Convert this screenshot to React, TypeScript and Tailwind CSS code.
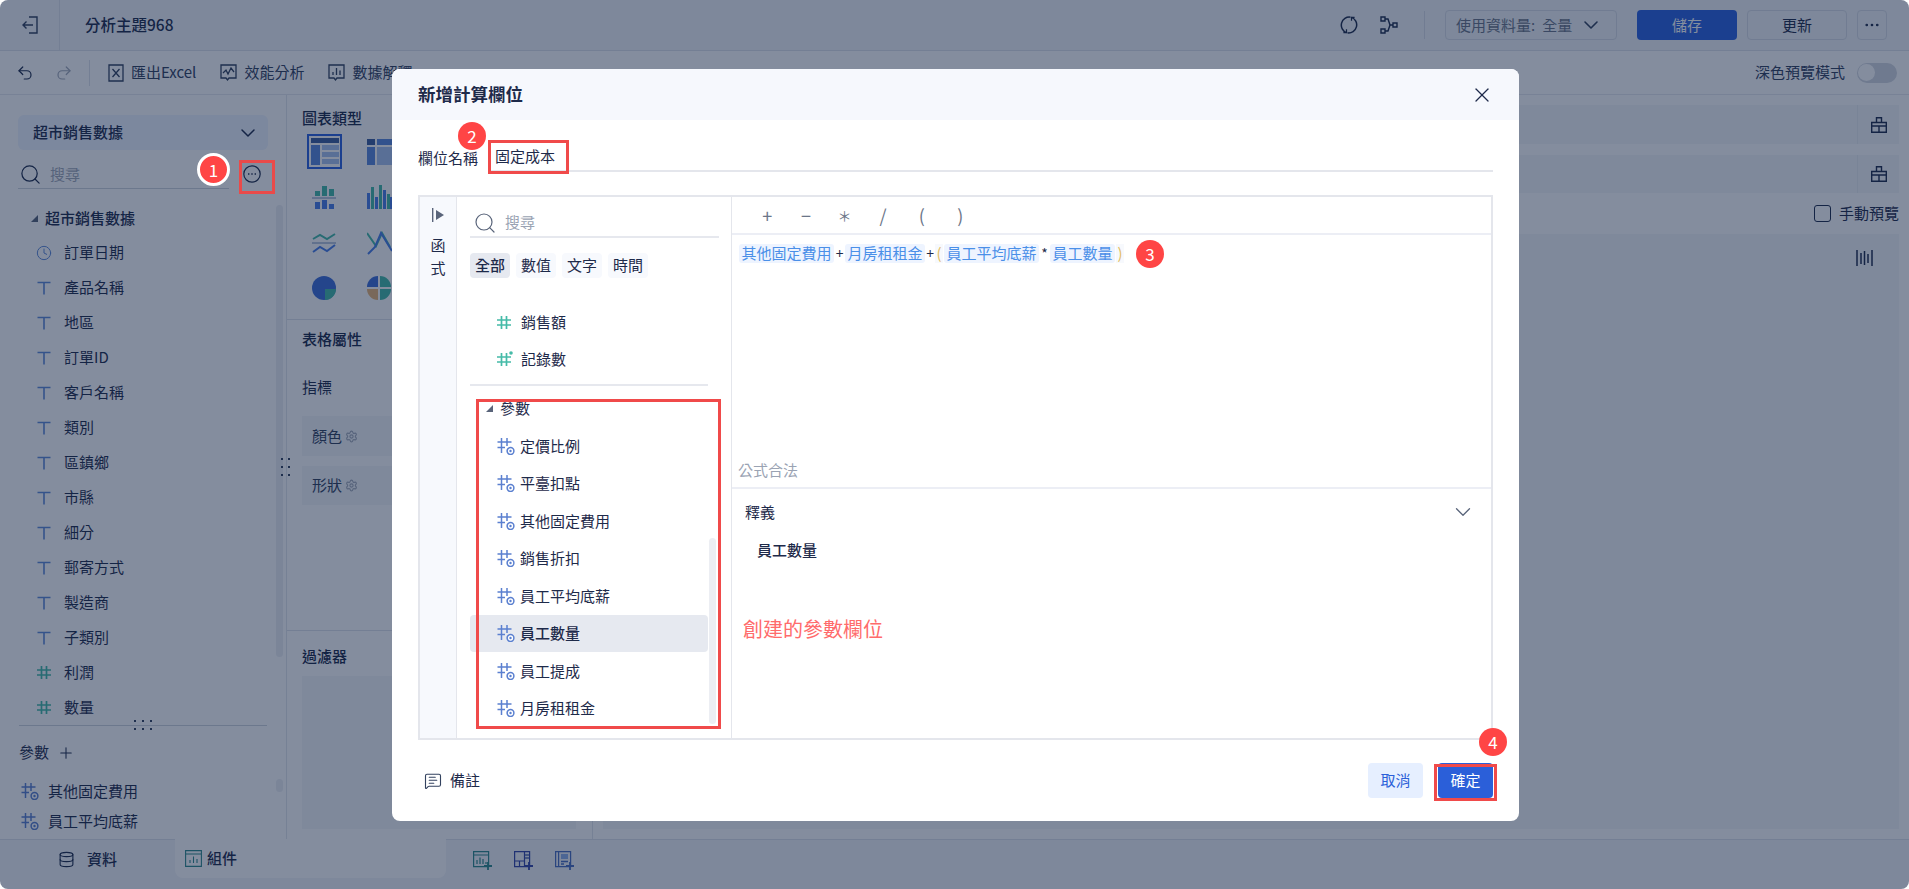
import {
  ChevronDown,
  Clock,
  Database,
  Ellipsis,
  MessageSquareText,
  Plus,
  Redo2,
  Search,
  Settings,
  Undo2,
  X,
} from "lucide-react";

/* ── small drawn icons ─────────────────────────────────────────────────── */
const TIcon = () => (
  <svg width="16" height="16" viewBox="0 0 16 16" className="shrink-0" fill="none" stroke="#5f8ad8" strokeWidth="1.6">
    <path d="M1.5 2.5h13M8 2.5v12" />
  </svg>
);

const HashIcon = ({ star }: { star?: boolean }) => (
  <svg width="17" height="17" viewBox="0 0 17 17" className="shrink-0" fill="none" stroke="#45bba8" strokeWidth="1.7">
    <path d="M5.5 2v13M10.5 2v13M1 6h14M1 11h14" />
    {star && <circle cx="15" cy="2" r="1.8" fill="#45bba8" stroke="none" />}
  </svg>
);

const ParamIcon = () => (
  <svg width="18" height="18" viewBox="0 0 18 18" className="shrink-0" fill="none" stroke="#5b80d0" strokeWidth="1.5">
    <path d="M4.5 1v15M10 1v8M0.5 5h14M0.5 10.5h7.5" />
    <circle cx="13.5" cy="14" r="3.4" fill="#fff" />
    <circle cx="13.5" cy="14" r="1.2" fill="#5b80d0" stroke="none" />
  </svg>
);

const EllipsisCircle = () => (
  <svg width="18" height="18" viewBox="0 0 18 18" fill="none" stroke="#1f2d4d" strokeWidth="1.2">
    <circle cx="9" cy="9" r="8.2" />
    <path d="M5 8.2h1.4v1.6H5zM8.3 8.2h1.4v1.6H8.3zM11.6 8.2H13v1.6h-1.4z" fill="#1f2d4d" stroke="none" />
  </svg>
);

const BackIcon = () => (
  <svg width="18" height="20" viewBox="0 0 18 20" fill="none" stroke="#33425f" strokeWidth="1.4">
    <path d="M8 2h8v16H8M12 10H2M5.5 6.5 2 10l3.5 3.5" />
  </svg>
);

const ExcelIcon = () => (
  <svg width="16" height="18" viewBox="0 0 16 18" fill="none" stroke="#33425f" strokeWidth="1.3">
    <path d="M1 1h14v16H1zM4.5 5l7 8M11.5 5l-7 8M1 1v16" />
  </svg>
);

const PulseIcon = () => (
  <svg width="17" height="18" viewBox="0 0 17 18" fill="none" stroke="#33425f" strokeWidth="1.3">
    <path d="M1 1h15v13H9l-1.5 2L6 14H1zM3 9l3-3 2 4 3-6 3 4" />
  </svg>
);

const BarsNoteIcon = () => (
  <svg width="17" height="18" viewBox="0 0 17 18" fill="none" stroke="#33425f" strokeWidth="1.3">
    <path d="M1 1h15v13H9l-1.5 2L6 14H1zM5 11V8M8.5 11V4M12 11V6.5" />
  </svg>
);

const CycleIcon = () => (
  <svg width="18" height="18" viewBox="0 0 18 18" fill="none" stroke="#1f2d4d" strokeWidth="1.5">
    <path d="M10.5 1.2A8 8 0 0 0 6.5 16.6M7.5 16.8A8 8 0 0 0 11.5 1.4" />
    <path d="M6.5 13.2v3.4H3.4M11.5 4.8V1.4h3.1" strokeWidth="1.2" />
  </svg>
);

const FlowIcon = () => (
  <svg width="18" height="18" viewBox="0 0 18 18" fill="none" stroke="#1f2d4d" strokeWidth="1.4">
    <path d="M1 1h4v4H1zM1 13h4v4H1zM13 7h4v4h-4zM5 3h3l2 6h3M5 15h3l2-6" />
  </svg>
);

const BrushIcon = () => (
  <svg width="16" height="16" viewBox="0 0 16 16" fill="none" stroke="#1f2d4d" strokeWidth="1.4">
    <path d="M.7 5.5h14.6v9.8H.7zM5.5 5.5V.7h5v4.8M.7 9h14.6M8 9v6.3" />
  </svg>
);

const WaveIcon = () => (
  <svg width="17" height="18" viewBox="0 0 17 18" fill="none" stroke="#1f2d4d" strokeWidth="1.5">
    <path d="M1 1v16M5 4v11M8.5 2v14M12 5v9M16 1v16" />
  </svg>
);

const Caret = () => (
  <svg width="7" height="7" viewBox="0 0 7 7" className="shrink-0">
    <path d="M7 0v7H0z" fill="#59647a" />
  </svg>
);

const RailIcon = () => (
  <svg width="14" height="16" viewBox="0 0 14 16" fill="#59647a">
    <path d="M1 1h1.4v14H1zM5 3l8 5-8 5z" />
  </svg>
);

/* ── chart type thumbnails ─────────────────────────────────────────────── */
const TableThumb = () => (
  <svg width="28" height="27" viewBox="0 0 28 27" fill="#5b88dc">
    <path d="M0 0h28v5H0z" fill="#3d5f9e" />
    <path d="M0 7h9v20H0z" />
    <path d="M11 7h17v5H11zM11 14h17v5H11zM11 21h17v5H11z" fill="#a9c2ee" />
  </svg>
);
const CrossThumb = () => (
  <svg width="26" height="26" viewBox="0 0 26 26" fill="#5b88dc">
    <path d="M0 0h8v6H0z" fill="#3d5f9e" />
    <path d="M10 0h16v6H10zM0 8h8v18H0z" />
    <path d="M10 8h16v18H10z" fill="#a9c2ee" />
  </svg>
);
const MirrorBarThumb = () => (
  <svg width="24" height="24" viewBox="0 0 24 24">
    <path d="M3 6h5v5H3zM10 1h5v10h-5zM17 4h5v7h-5z" fill="#45bba8" />
    <path d="M0 12h24v2H0z" fill="#b9c7dd" />
    <path d="M3 17h5v7H3zM10 15h5v9h-5zM17 19h5v5h-5z" fill="#4a7fe8" />
  </svg>
);
const GroupBarThumb = () => (
  <svg width="26" height="24" viewBox="0 0 26 24">
    <path d="M0 8h3v16H0zM8 12h3v12H8zM16 5h3v19h-3zM23 12h3v12h-3z" fill="#4a7fe8" />
    <path d="M4 2h3v22H4zM12 0h3v24h-3zM20 9h3v15h-3z" fill="#45bba8" />
  </svg>
);
const AreaLineThumb = () => (
  <svg width="24" height="22" viewBox="0 0 24 22" fill="none" strokeWidth="2">
    <path d="M1 7 8 3l7 4 8-5" stroke="#45bba8" />
    <path d="M0 11h24" stroke="#b9c7dd" />
    <path d="M1 20l7-5 7 4 8-6" stroke="#4a7fe8" />
  </svg>
);
const CrossLineThumb = () => (
  <svg width="26" height="24" viewBox="0 0 26 24" fill="none" strokeWidth="2">
    <path d="M0 2l9 13 6-13 8 14" stroke="#45bba8" />
    <path d="M1 23l7-7 6-14 11 18" stroke="#4a7fe8" />
  </svg>
);
const PieThumb = () => (
  <svg width="24" height="24" viewBox="0 0 24 24">
    <circle cx="12" cy="12" r="12" fill="#3f6fd8" />
    <path d="M13 13h11a11 11 0 0 1-11 11z" fill="#45bba8" />
  </svg>
);
const MultiPieThumb = () => (
  <svg width="24" height="24" viewBox="0 0 24 24">
    <path d="M11 0v11H0A11 11 0 0 1 11 0z" fill="#3f6fd8" />
    <path d="M13 0a11 11 0 0 1 11 11H13z" fill="#45bba8" />
    <path d="M13 13h11a11 11 0 0 1-11 11z" fill="#45bba8" />
    <path d="M11 13v11A11 11 0 0 1 0 13z" fill="#e8b478" />
  </svg>
);

const AddChart = () => (
  <svg width="20" height="19" viewBox="0 0 20 19" fill="none" stroke="#2f8a8c" strokeWidth="1.2">
    <path d="M.6.6h15v15H.6zM.6 4h15M4 13V9M7 13V6.5M10 13V8M13 13v-2" />
    <path d="M15 11v8M11 15h8" strokeWidth="1.8" />
  </svg>
);
const AddGrid = () => (
  <svg width="20" height="19" viewBox="0 0 20 19" fill="none" stroke="#3547a8" strokeWidth="1.2">
    <path d="M.6.6h15v15H.6zM.6 10h10M10.5.6v15M5.5 10v5.6" />
    <path d="M11 4h4M11 7h4" stroke="#7c8fc0" strokeWidth="2" />
    <path d="M15 11v8M11 15h8" strokeWidth="1.8" />
  </svg>
);
const AddPage = () => (
  <svg width="20" height="19" viewBox="0 0 20 19" fill="none" stroke="#4a6fc0" strokeWidth="1.2">
    <path d="M.6.6h15v15H.6zM3.6.6v15" />
    <path d="M6 3h7v5H6z" fill="#8fb0ea" stroke="none" />
    <path d="M6 10.5h7M6 13h3" strokeWidth="1.4" />
    <path d="M15 11v8M11 15h8" strokeWidth="1.8" />
  </svg>
);

const CardChartIcon = () => (
  <svg width="17" height="17" viewBox="0 0 17 17" fill="none" stroke="#2f8a8c" strokeWidth="1.1">
    <path d="M.6.6h15.8v15.8H.6zM.6 4h15.8M5 13v-3M8.5 13V6.5M12 13V9" />
  </svg>
);

/* ── data ──────────────────────────────────────────────────────────────── */
const fields: { name: string; kind: "date" | "text" | "num" }[] = [
  { name: "訂單日期", kind: "date" },
  { name: "產品名稱", kind: "text" },
  { name: "地區", kind: "text" },
  { name: "訂單ID", kind: "text" },
  { name: "客戶名稱", kind: "text" },
  { name: "類別", kind: "text" },
  { name: "區鎮鄉", kind: "text" },
  { name: "市縣", kind: "text" },
  { name: "細分", kind: "text" },
  { name: "郵寄方式", kind: "text" },
  { name: "製造商", kind: "text" },
  { name: "子類別", kind: "text" },
  { name: "利潤", kind: "num" },
  { name: "數量", kind: "num" },
];

const params = ["定價比例", "平臺扣點", "其他固定費用", "銷售折扣", "員工平均底薪", "員工數量", "員工提成", "月房租租金"];

const Token = ({ children }: { children: string }) => (
  <span className="h-[19px] flex items-center rounded-[3px] bg-[#eef4ff] px-[2.5px] text-[#4a8fe8]">{children}</span>
);

const Op = ({ children, w }: { children: string; w: string }) => (
  <span className={`text-center text-[#1e2a4a] text-[14px] ${w}`}>{children}</span>
);

const Paren = ({ children }: { children: string }) => (
  <span className="h-[19px] w-[8px] flex items-center justify-center bg-[#f7f9fd] text-[#e3bd62] text-[15px]">{children}</span>
);

const Badge = ({ n, pos }: { n: number; pos: string }) => (
  <div className={`absolute h-[28px] w-[28px] rounded-full bg-[#ff4545] flex items-center justify-center text-white text-[17px] ${pos}`}>
    {n}
  </div>
);

/* ═══════════════════════════════════════════════════════════════════════ */
export default function App() {
  return (
    <div className="relative w-screen h-screen overflow-hidden rounded-lg bg-white flex flex-col text-[15px] text-[#1f2d4d] font-['Noto_Sans_CJK_TC','Noto_Sans',sans-serif]">
      {/* ═════════ TOP BAR ═════════ */}
      <header className="h-[51px] shrink-0 flex items-center bg-[#f2f4f8] border-b border-[#dfe3ea]">
        <div className="w-[60px] h-full flex items-center justify-center border-r border-[#dfe3ea]">
          <BackIcon />
        </div>
        <span className="ml-[25px] text-[15.5px] font-medium">分析主題968</span>

        <div className="ml-auto flex items-center">
          <CycleIcon />
          <span className="ml-[22px]"><FlowIcon /></span>
          <span className="ml-[26px] h-[28px] w-px bg-[#d9dde6]" />
          <div className="ml-[20px] w-[172px] h-[30px] flex items-center border border-[#d9dde6] rounded-sm pl-[10px] text-[#6b7588]">
            使用資料量:
            <span className="ml-[7px]">全量</span>
            <ChevronDown className="ml-[7px] h-[24px] w-[24px] text-[#33425f]" strokeWidth={1.6} />
          </div>
          <button className="ml-[20px] w-[100px] h-[30px] rounded-sm bg-[#2c62e0] text-white">儲存</button>
          <button className="ml-[10px] w-[100px] h-[30px] rounded-sm border border-[#d9dde6]">更新</button>
          <button className="ml-[10px] mr-[22px] w-[30px] h-[30px] rounded-sm border border-[#d9dde6] flex items-center justify-center">
            <Ellipsis className="h-[18px] w-[18px]" strokeWidth={1.6} />
          </button>
        </div>
      </header>

      {/* ═════════ TOOLBAR ═════════ */}
      <div className="h-[44px] shrink-0 flex items-center pl-[16px] pr-[12px] border-b border-[#e6e9ef] text-[#33425f]">
        <Undo2 className="h-[18px] w-[18px] text-[#1f2d4d]" strokeWidth={1.6} />
        <Redo2 className="ml-[21px] h-[18px] w-[18px] text-[#a3aab8]" strokeWidth={1.6} />
        <span className="ml-[16px] h-[26px] w-px bg-[#dfe3ea]" />
        <span className="ml-[18px]"><ExcelIcon /></span>
        <span className="ml-[7px]">匯出Excel</span>
        <span className="ml-[24px]"><PulseIcon /></span>
        <span className="ml-[7px]">效能分析</span>
        <span className="ml-[24px]"><BarsNoteIcon /></span>
        <span className="ml-[7px]">數據解釋</span>

        <span className="ml-auto">深色預覽模式</span>
        <div className="ml-[12px] h-[20px] w-[40px] rounded-full bg-[#d4d8e0] flex items-center pl-px">
          <span className="h-[17px] w-[17px] rounded-full bg-white" />
        </div>
      </div>

      {/* ═════════ MAIN ═════════ */}
      <div className="flex-1 min-h-0 flex">
        {/* data pane */}
        <aside className="relative w-[287px] shrink-0 border-r border-[#e3e6ec] pt-[20px]">
          <div className="mx-[18px] h-[35px] flex items-center justify-between rounded-md bg-[#eef4ff] pl-[15px] pr-[8px] font-medium">
            超市銷售數據
            <ChevronDown className="h-[24px] w-[24px]" strokeWidth={1.5} />
          </div>

          <div className="ml-[18px] mt-[10px] w-[211px] h-[29px] flex items-center border-b border-[#cfd4dd] pl-[1px]">
            <Search className="h-[23px] w-[23px] text-[#1f2d4d]" strokeWidth={1.3} />
            <span className="ml-[8px] text-[#a3aab8]">搜尋</span>
          </div>
          <span className="absolute left-[243px] top-[70px]"><EllipsisCircle /></span>

          <div className="mt-[13px] h-[33px] flex items-center pl-[31px] font-medium">
            <Caret />
            <span className="ml-[7px]">超市銷售數據</span>
          </div>
          {fields.map((f) => (
            <div key={f.name} className="h-[35px] flex items-center pl-[36px]">
              <span className="w-[28px] flex">
                {f.kind === "date" && <Clock className="h-[16px] w-[16px] text-[#5f8ad8]" strokeWidth={1.5} />}
                {f.kind === "text" && <TIcon />}
                {f.kind === "num" && <HashIcon />}
              </span>
              {f.name}
            </div>
          ))}

          <div className="mx-[19px] border-t border-[#cfd4dd]" />
          <div className="mt-[9px] h-[35px] flex items-center pl-[19px]">
            參數
            <Plus className="ml-[8px] h-[18px] w-[18px]" strokeWidth={1.4} />
          </div>
          <div className="mt-[6px] h-[30px] flex items-center gap-[9px] pl-[21px]"><ParamIcon />其他固定費用</div>
          <div className="h-[30px] flex items-center gap-[9px] pl-[21px]"><ParamIcon />員工平均底薪</div>

          {/* scrollbars and drag handles */}
          <div className="absolute left-[276px] top-[110px] h-[452px] w-[7px] rounded bg-[#eceef3]" />
          <div className="absolute left-[276px] top-[684px] h-[13px] w-[7px] rounded bg-[#eceef3]" />
          <div className="absolute left-[134px] top-[625px] grid grid-cols-3 gap-x-[6px] gap-y-[6px]">
            {[0, 1, 2, 3, 4, 5].map((i) => <span key={i} className="h-[2px] w-[2px] bg-[#33425f]" />)}
          </div>
          <div className="absolute left-[281px] top-[363px] grid grid-cols-2 gap-x-[7px] gap-y-[6px]">
            {[0, 1, 2, 3, 4, 5].map((i) => <span key={i} className="h-[2px] w-[2px] bg-[#33425f]" />)}
          </div>
        </aside>

        {/* chart pane */}
        <section className="w-[306px] shrink-0 border-r border-[#e3e6ec] flex flex-col">
          <div className="h-[225px] shrink-0 border-b border-[#dfe3ea] pl-[15px]">
            <div className="mt-[13px] leading-[20px] font-medium text-[#1a2a4a]">圖表類型</div>
            <div className="mt-[1px] grid grid-cols-[60px_60px] auto-rows-[45.5px] items-center ml-[5px]">
              <div className="h-[35px] w-[35px] border-2 border-[#2c62e0] flex items-center justify-center"><TableThumb /></div>
              <CrossThumb />
              <div className="pl-[5px]"><MirrorBarThumb /></div>
              <GroupBarThumb />
              <div className="pl-[5px]"><AreaLineThumb /></div>
              <CrossLineThumb />
              <div className="pl-[5px]"><PieThumb /></div>
              <MultiPieThumb />
            </div>
          </div>
          <div className="h-[311px] shrink-0 border-b border-[#dfe3ea] pl-[15px]">
            <div className="mt-[7px] leading-[24px] font-medium text-[#1a2a4a]">表格屬性</div>
            <div className="mt-[24px] leading-[24px]">指標</div>
            <div className="mt-[17px] w-[274px] h-[40px] bg-[#f4f6f9] flex items-center pl-[10px] text-[#33425f]">
              顏色<Settings className="ml-[3px] h-[13px] w-[13px] text-[#a3aab8]" />
            </div>
            <div className="mt-[10px] w-[274px] h-[39px] bg-[#f4f6f9] flex items-center pl-[10px] text-[#33425f]">
              形狀<Settings className="ml-[3px] h-[13px] w-[13px] text-[#a3aab8]" />
            </div>
          </div>
          <div className="flex-1 pl-[15px]">
            <div className="mt-[13px] leading-[24px] font-medium text-[#1a2a4a]">過濾器</div>
            <div className="mt-[8px] w-[274px] h-[153px] bg-[#f4f6f9]" />
          </div>
        </section>

        {/* preview pane */}
        <section className="flex-1 min-w-0 pl-[10px] pr-[10px] pt-[10px]">
          <div className="h-[39px] flex justify-end bg-[#f4f6f9]">
            <div className="w-[42px] border-l border-[#e9ecf1] flex items-center justify-center"><BrushIcon /></div>
          </div>
          <div className="mt-[11px] h-[38px] flex justify-end bg-[#f4f6f9]">
            <div className="w-[42px] border-l border-[#e9ecf1] flex items-center justify-center"><BrushIcon /></div>
          </div>
          <div className="h-[41px] flex items-center justify-end">
            <span className="h-[17px] w-[17px] rounded-[3px] border border-[#1f2d4d]" />
            <span className="ml-[8px]">手動預覽</span>
          </div>
          <div className="h-[595px] bg-[#f4f6f9] flex justify-end pt-[15px] pr-[26px]">
            <WaveIcon />
          </div>
        </section>
      </div>

      {/* ═════════ BOTTOM TABS ═════════ */}
      <footer className="h-[50px] shrink-0 flex bg-[#f2f4f8] font-medium">
        <div className="w-[175px] h-full border-t border-[#dfe3ea] flex items-center pb-[10px] pl-[58px]">
          <Database className="h-[17px] w-[17px]" strokeWidth={1.6} />
          <span className="ml-[12px]">資料</span>
        </div>
        <div className="w-[271px] h-[39px] bg-white rounded-b-lg flex items-center pl-[10px]">
          <CardChartIcon />
          <span className="ml-[5px]">組件</span>
        </div>
        <div className="flex-1 h-full border-t border-[#dfe3ea] flex items-center gap-[21px] pb-[9px] pl-[27px]">
          <AddChart />
          <AddGrid />
          <AddPage />
        </div>
      </footer>

      {/* ═════════ DIALOG ═════════ */}
      <div className="absolute inset-0 bg-[#0a1c3e]/50" />
      <div className="absolute left-[392px] top-[69px] w-[1127px] h-[752px] rounded-lg overflow-hidden bg-white flex flex-col text-[#1e2a4a]">
        <div className="h-[51px] shrink-0 bg-[#f6f8fd] flex items-center justify-between pl-[26px] pr-[25px]">
          <span className="text-[17.5px] font-bold">新增計算欄位</span>
          <X className="h-[24px] w-[24px]" strokeWidth={1.3} />
        </div>

        <div className="mx-[26px] mt-[22px] h-[30px] flex items-center">
          <span className="w-[70px] shrink-0 pt-[3px]">欄位名稱</span>
          <div className="flex-1 h-full flex items-center pl-[7px] border-b-2 border-[#e4e6ec]">固定成本</div>
        </div>

        <div className="mx-[26px] mt-[23px] h-[545px] shrink-0 flex border-2 border-[#e4e6ec] border-b-2">
          {/* rail */}
          <div className="w-[37px] shrink-0 bg-[#f7f9fd] border-r border-[#e4e6ec] flex flex-col items-center pt-[10px]">
            <RailIcon />
            <span className="mt-[11px]">函</span>
            <span>式</span>
          </div>

          {/* function list */}
          <div className="relative w-[275px] shrink-0 border-r border-[#e4e6ec] overflow-hidden">
            <div className="ml-[13px] mr-[12px] h-[41px] flex items-center border-b-2 border-[#e6e8ee] pl-[3px] pt-[12px]">
              <Search className="h-[24px] w-[24px] text-[#59647a]" strokeWidth={1.2} />
              <span className="ml-[8px] text-[#9aa3b3]">搜尋</span>
            </div>
            <div className="ml-[13px] mt-[15px] flex gap-[6px]">
              <span className="w-[40px] h-[25px] flex items-center justify-center rounded-sm bg-[#e6e9f0] font-medium">全部</span>
              <span className="w-[40px] h-[25px] flex items-center justify-center rounded-sm bg-[#f7f9fd]">數值</span>
              <span className="w-[40px] h-[25px] flex items-center justify-center rounded-sm bg-[#f7f9fd]">文字</span>
              <span className="w-[40px] h-[25px] flex items-center justify-center rounded-sm bg-[#f7f9fd]">時間</span>
            </div>
            <div className="mt-[26px] h-[37px] flex items-center gap-[8px] pl-[39px]"><HashIcon />銷售額</div>
            <div className="h-[37px] flex items-center gap-[8px] pl-[39px]"><HashIcon star />記錄數</div>
            <div className="ml-[13px] w-[238px] mt-[6px] border-t-2 border-[#e6e8ee]" />
            <div className="mt-[3px] h-[38px] flex items-center pl-[29px]">
              <Caret />
              <span className="ml-[7px]">參數</span>
            </div>
            {params.map((p) => (
              <div
                key={p}
                className={
                  p === "員工數量"
                    ? "ml-[13px] w-[238px] h-[37.5px] rounded flex items-center gap-[5px] pl-[27px] bg-[#e6e9f0] font-medium"
                    : "ml-[13px] w-[238px] h-[37.5px] flex items-center gap-[5px] pl-[27px]"
                }
              >
                <ParamIcon />
                {p}
              </div>
            ))}
            <div className="absolute left-[252px] top-[341px] h-[186px] w-[7px] rounded bg-[#eceef3]" />
          </div>

          {/* formula editor */}
          <div className="flex-1 min-w-0 flex flex-col">
            <div className="h-[38px] shrink-0 flex items-center pl-[16px] border-b-2 border-[#eceef5] text-[#6b7588] text-[18px]">
              {["+", "−", "＊", "/", "(", ")"].map((o) => (
                <span key={o} className={o === "＊" ? "w-[38.6px] text-center text-[14px]" : "w-[38.6px] text-center"}>{o}</span>
              ))}
            </div>
            <div className="flex-1 pt-[8px] pl-[7px]">
              <div className="flex items-center">
                <Token>其他固定費用</Token>
                <Op w="w-[11px]">+</Op>
                <Token>月房租租金</Token>
                <Op w="w-[10px]">+</Op>
                <Paren>(</Paren>
                <span className="w-px" />
                <Token>員工平均底薪</Token>
                <Op w="w-[11px]">*</Op>
                <Token>員工數量</Token>
                <span className="w-px" />
                <Paren>)</Paren>
              </div>
            </div>
            <div className="h-[28px] shrink-0 pl-[6px] text-[#9aa3b3]">公式合法</div>
            <div className="h-[251px] shrink-0 border-t-2 border-[#eceef5]">
              <div className="h-[46px] flex items-center justify-between pl-[13px] pr-[15px]">
                釋義
                <ChevronDown className="h-[26px] w-[26px] text-[#59647a]" strokeWidth={1.2} />
              </div>
              <div className="mt-[4px] pl-[25px] font-medium">員工數量</div>
            </div>
          </div>
        </div>

        <div className="flex-1 mx-[26px] flex items-center justify-between">
          <div className="flex items-center gap-[8px] pl-[6px]">
            <MessageSquareText className="h-[18px] w-[18px] text-[#33425f]" strokeWidth={1.5} />
            備註
          </div>
          <div className="flex gap-[15px]">
            <button className="w-[55px] h-[35px] rounded-sm bg-[#e6efff] text-[#2b5fd9]">取消</button>
            <button className="w-[55px] h-[35px] rounded-sm bg-[#2b5fd9] text-white">確定</button>
          </div>
        </div>
      </div>

      {/* ═════════ ANNOTATIONS ═════════ */}
      <div className="absolute left-[239px] top-[160px] w-[36px] h-[34px] border-[3px] border-[#e94a4a]" />
      <div className="absolute left-[488px] top-[140px] w-[81px] h-[34px] border-[3px] border-[#f04a4a]" />
      <div className="absolute left-[476px] top-[399px] w-[245px] h-[330px] border-[3px] border-[#f04a4a]" />
      <div className="absolute left-[1434px] top-[764px] w-[63px] h-[37px] border-[3px] border-[#f04a4a]" />
      <div className="absolute left-[197px] top-[153px] h-[33px] w-[33px] rounded-full border-[3px] border-white bg-[#ff4545] flex items-center justify-center text-white text-[17px]">1</div>
      <Badge n={2} pos="left-[458px] top-[122px]" />
      <Badge n={3} pos="left-[1136px] top-[240px]" />
      <Badge n={4} pos="left-[1479px] top-[728px]" />
      <div className="absolute left-[743px] top-[614px] text-[20px] text-[#ff6b6b]">創建的參數欄位</div>
    </div>
  );
}
